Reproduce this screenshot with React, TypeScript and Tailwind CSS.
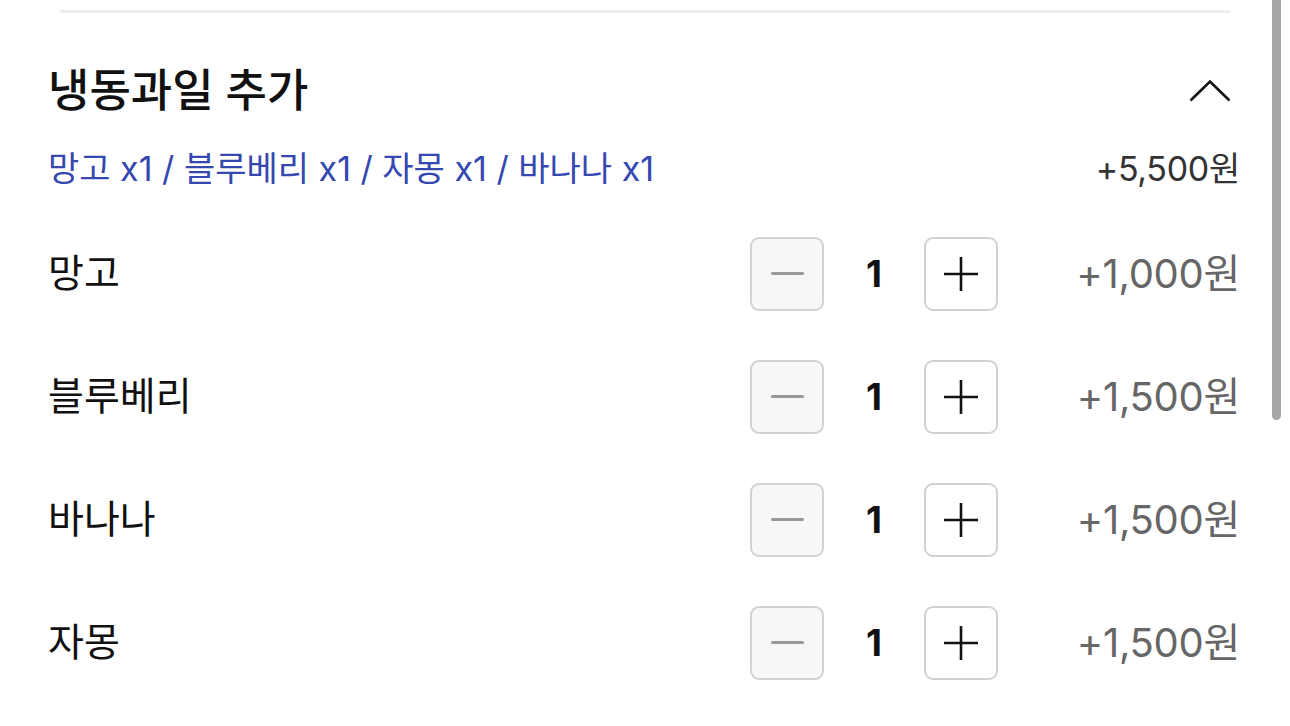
import React from 'react';

type Fruit = { name: string; qty: number; price: string };

const fruits: Fruit[] = [
  { name: '망고', qty: 1, price: '+1,000원' },
  { name: '블루베리', qty: 1, price: '+1,500원' },
  { name: '바나나', qty: 1, price: '+1,500원' },
  { name: '자몽', qty: 1, price: '+1,500원' },
];

const font = { fontFamily: 'Inter, "Noto Sans CJK KR", sans-serif' };

const App: React.FC = () => {
  return (
    <div className="relative w-[1290px] h-[726px] bg-white overflow-hidden" style={font}>
      {/* top divider */}
      <div className="mx-[60px] mt-[10px] h-[3px] bg-[#eeeeee]" />

      <div className="px-[48px] pr-[50px]">
        {/* section header */}
        <div className="mt-[48px] h-[60px] flex items-center justify-between">
          <h2 className="text-[45px] font-medium text-[#111111]">냉동과일 추가</h2>
          <button className="mr-[8px] w-[44px] h-[28px] flex items-center justify-center" aria-label="접기">
            <svg width="42" height="24" viewBox="0 0 42 24" fill="none">
              <path d="M1.5 21.5 L21 2.5 L40.5 21.5" stroke="#111111" strokeWidth="2.6" />
            </svg>
          </button>
        </div>

        {/* summary */}
        <div className="mt-[25px] h-[44px] flex items-center justify-between">
          <p className="text-[34px] text-[#3548b0]">
            망고 x1 / 블루베리 x1 / 자몽 x1 / 바나나 x1
          </p>
          <span className="text-[34px] text-[#333333] tracking-[-0.3px]">+5,500원</span>
        </div>

        {/* items */}
        <div className="mt-[22px]">
          {fruits.map((f) => (
            <div key={f.name} className="h-[123px] flex items-center">
              <span className="flex-1 text-[39px] text-[#111111]">{f.name}</span>
              <button className="w-[74px] h-[74px] rounded-[9px] border-2 border-[#d2d2d2] bg-[#f7f7f7] flex items-center justify-center">
                <span className="block w-[33px] h-[3px] rounded-full bg-[#999999]" />
              </button>
              <span className="w-[100px] text-center text-[37px] font-bold text-[#111111]">{f.qty}</span>
              <button className="w-[74px] h-[74px] rounded-[9px] border-2 border-[#d2d2d2] bg-white flex items-center justify-center">
                <svg width="34" height="34" viewBox="0 0 34 34" fill="none">
                  <path d="M17 0 V34 M0 17 H34" stroke="#111111" strokeWidth="2.6" />
                </svg>
              </button>
              <span className="w-[242px] text-right text-[40px] text-[#666666] tracking-[-0.3px]">{f.price}</span>
            </div>
          ))}
        </div>
      </div>

      {/* scrollbar thumb */}
      <div className="absolute right-[9px] top-0 w-[9px] h-[420px] rounded-b-full bg-[#a6a6a6]" />
    </div>
  );
};

export default App;
